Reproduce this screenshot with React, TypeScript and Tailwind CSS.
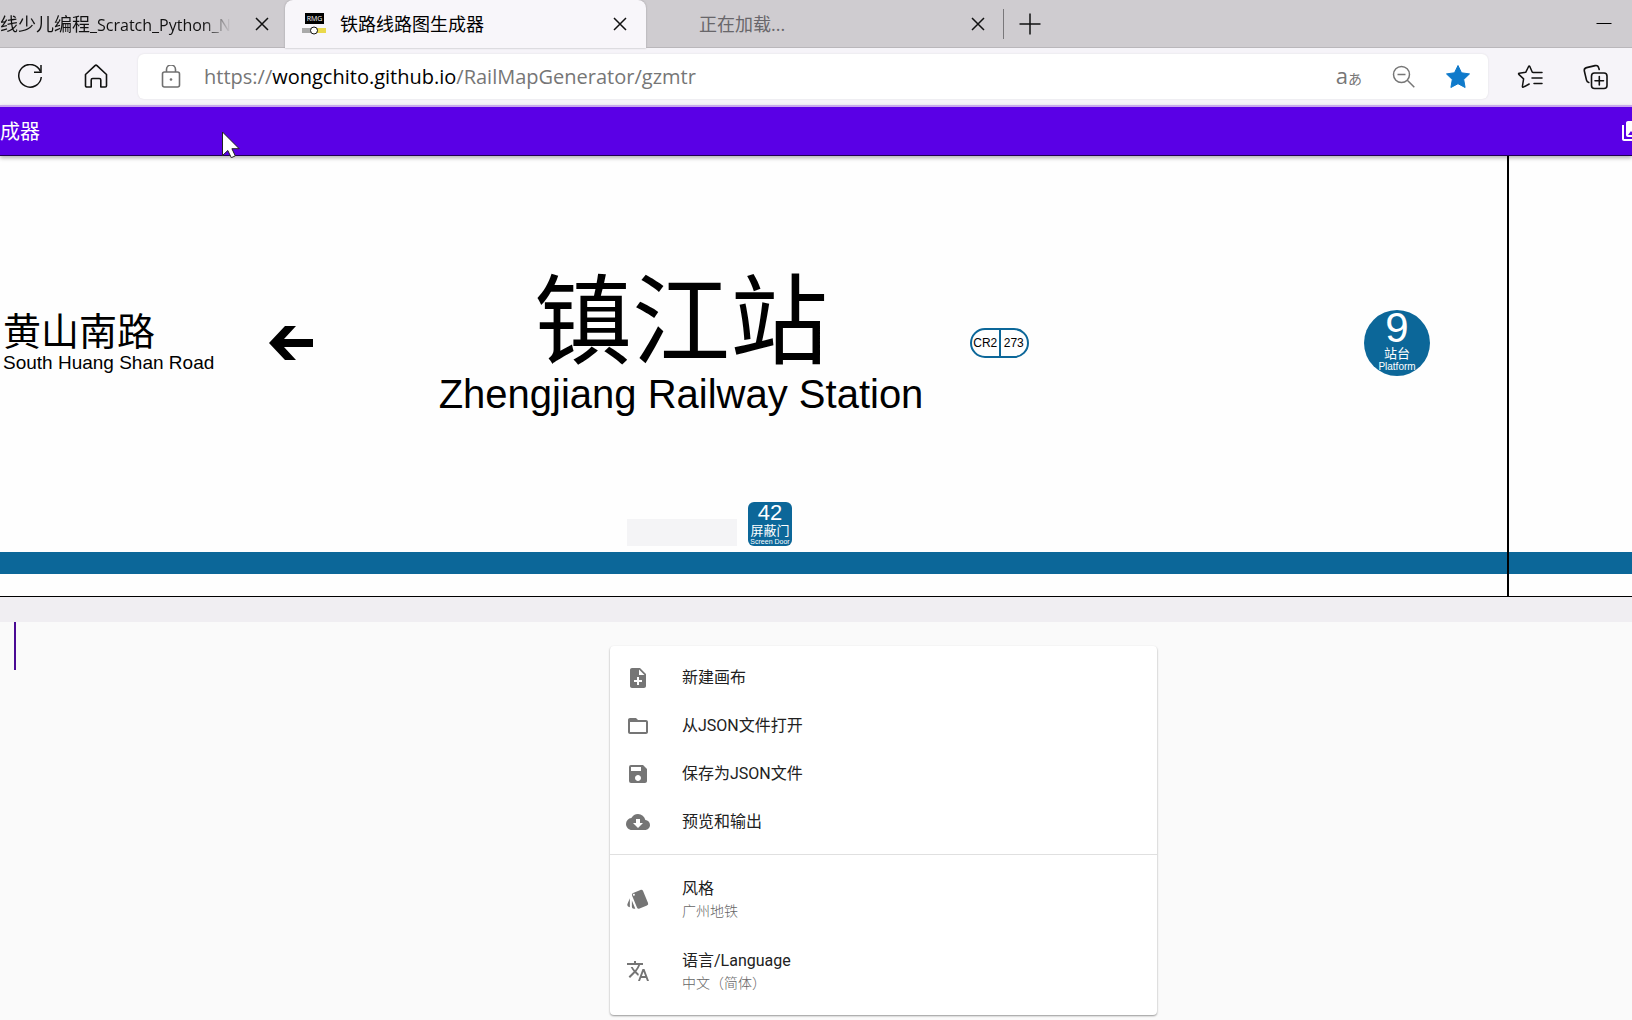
import React from 'react';
import {
  MdCloudDownload,
  MdFolderOpen,
  MdNoteAdd,
  MdPhotoLibrary,
  MdSave,
  MdStyle,
  MdTranslate,
} from 'react-icons/md';

type MenuItem = {
  icon: React.ReactNode;
  label: string;
  value?: string;
};

const fileItems: MenuItem[] = [
  { icon: <MdNoteAdd size={24} />, label: '新建画布' },
  { icon: <MdFolderOpen size={24} />, label: '从JSON文件打开' },
  { icon: <MdSave size={24} />, label: '保存为JSON文件' },
  { icon: <MdCloudDownload size={24} />, label: '预览和输出' },
];

const settingItems: MenuItem[] = [
  { icon: <MdStyle size={24} />, label: '风格', value: '广州地铁' },
  { icon: <MdTranslate size={24} />, label: '语言/Language', value: '中文（简体）' },
];

const CloseButton: React.FC = () => (
  <button type="button" aria-label="Close tab" className="flex h-6 w-6 shrink-0 items-center justify-center">
    <svg width="14" height="14" viewBox="0 0 14 14" fill="none" stroke="#111" strokeWidth="1.5">
      <path d="M1 1l12 12M13 1L1 13" />
    </svg>
  </button>
);

const Favicon: React.FC = () => (
  <svg width="24" height="22" viewBox="0 0 24 22" className="shrink-0">
    <rect x="3" y="0" width="19" height="11" fill="#000" />
    <text x="12.5" y="8" textAnchor="middle" fontSize="7" fontFamily="Open Sans, sans-serif" fill="#fff">
      RMG
    </text>
    <rect x="0" y="15" width="10" height="5" fill="#aaa" />
    <rect x="14" y="15" width="10" height="5" fill="#ead94c" />
    <circle cx="12" cy="17.5" r="3.5" fill="#fff" stroke="#111" />
  </svg>
);

const TabStrip: React.FC = () => (
  <div className="flex h-12 items-stretch bg-[#cfccd0]">
    <div className="flex w-[285px] items-center justify-between pr-[11px] shadow-[inset_0_-1px_0_#bab7bb]">
      <span className="bg-linear-to-r from-[#111] from-88% to-transparent bg-clip-text text-lg whitespace-nowrap text-transparent">
        线少儿编程<span className="text-base">_Scratch_Python_N</span>
      </span>
      <CloseButton />
    </div>
    <div className="flex w-[361px] items-center rounded-t-lg bg-[#f8f6fa] pr-[14px] pl-[17px] shadow-[0_0_2px_#9a979b]">
      <Favicon />
      <span className="ml-[14px] flex-1 text-lg text-black">铁路线路图生成器</span>
      <CloseButton />
    </div>
    <div className="flex w-[357px] items-center pr-[13px] pl-[53px] shadow-[inset_0_-1px_0_#bab7bb]">
      <span className="flex-1 text-lg text-[#68666a]">正在加载...</span>
      <CloseButton />
    </div>
    <div className="flex flex-1 items-center shadow-[inset_0_-1px_0_#bab7bb]">
      <div className="h-[30px] w-px bg-[#79777a]" />
      <button type="button" aria-label="New tab" className="ml-[15px]">
        <svg width="22" height="22" viewBox="0 0 22 22" stroke="#111" strokeWidth="1.5">
          <path d="M11 0.5v21M0.5 11h21" />
        </svg>
      </button>
      <button type="button" aria-label="Minimize" className="mr-5 ml-auto">
        <svg width="16" height="16" viewBox="0 0 16 16" stroke="#000">
          <path d="M0.5 7.5h15" />
        </svg>
      </button>
    </div>
  </div>
);

const AddressBar: React.FC = () => (
  <div className="flex h-[57px] items-center bg-[#f6f4f9]">
    <button type="button" aria-label="Reload" className="ml-[17px]">
      <svg width="26" height="26" viewBox="0 0 26 26" fill="none" stroke="#111" strokeWidth="1.5">
        <path d="M23.5 7.5A11.3 11.3 0 1 0 24.3 13" />
        <path d="M24 1v7.2h-7" />
      </svg>
    </button>
    <button type="button" aria-label="Home" className="ml-10">
      <svg width="26" height="26" viewBox="0 0 26 26" fill="none" stroke="#111" strokeWidth="1.6">
        <path
          strokeLinejoin="round"
          d="M2.5 10.500L12 1.600a1.500 1.500 0 0 1 2 0l9.500 8.900v11.200a1.300 1.300 0 0 1-1.300 1.300h-4.400V16a1.500 1.500 0 0 0-1.500-1.500h-6.600A1.500 1.500 0 0 0 8.200 16v7H3.800a1.300 1.300 0 0 1-1.300-1.300z"
        />
      </svg>
    </button>
    <div className="ml-[29px] flex h-[45px] flex-1 items-center rounded-md bg-white shadow-[0_0_2px_#dddbe0]">
      <svg width="20" height="24" viewBox="0 0 20 24" fill="none" stroke="#707070" strokeWidth="1.6" className="ml-[23px]">
        <rect x="1.5" y="7" width="17" height="15" rx="2" />
        <path d="M5.5 7V4.500a4.500 4.500 0 0 1 9 0V7" />
        <circle cx="10" cy="14.5" r="1.3" fill="#707070" stroke="none" />
      </svg>
      <a href="https://wongchito.github.io/RailMapGenerator/gzmtr" className="ml-[23px] flex-1 text-xl text-[#767676]">
        https://<span className="text-black">wongchito.github.io</span>/RailMapGenerator/gzmtr
      </a>
      <button type="button" aria-label="Translate page" className="flex items-baseline text-[#767676]">
        <span className="text-[22px] leading-6">a</span>
        <span className="text-sm leading-6">あ</span>
      </button>
      <button type="button" aria-label="Zoom out" className="ml-[30px]">
        <svg width="24" height="24" viewBox="0 0 24 24" fill="none" stroke="#767676" strokeWidth="1.5">
          <circle cx="9.5" cy="9.5" r="8" />
          <path d="M5.5 9.5h8M15.3 15.3l7 7" />
        </svg>
      </button>
      <button type="button" aria-label="Favorite" className="mr-[17px] ml-[29px]">
        <svg width="26" height="26" viewBox="0 0 26 26" fill="#0f7acb" stroke="#0f7acb" strokeLinejoin="round">
          <path d="M13 1.500l3.500 7.300 8 1.100-5.800 5.600 1.400 8L13 19.700l-7.100 3.800 1.400-8L1.500 9.900l8-1.100z" />
        </svg>
      </button>
    </div>
    <button type="button" aria-label="Favorites" className="ml-[29px]">
      <svg width="26" height="26" viewBox="0 0 26 26" fill="none" stroke="#111" strokeWidth="1.5" strokeLinejoin="round" strokeLinecap="round">
        <path d="M16.500 8.500l-1.200-.2L12.800 2.500q-.6-1-1.200 0L8.700 8.300l-6.500.9q-1.100.3-.4 1.200l4.800 4.500-1.200 7.500q0 1.100 1 .7l5.800-3.100" />
        <path d="M17 8.500h8M15 14h10M17 19.500h8" />
      </svg>
    </button>
    <button type="button" aria-label="Collections" className="mr-[23px] ml-10">
      <svg width="26" height="26" viewBox="0 0 26 26" fill="none" stroke="#111" strokeWidth="1.6" strokeLinecap="round">
        <rect x="8.5" y="9" width="15.5" height="15.5" rx="3" />
        <path d="M16.300 12.500v8.500M12 16.800h8.500" />
        <path d="M5.800 18.500a3 3 0 0 1-2.300-2.300L1.400 7.200a3 3 0 0 1 2.200-3.600l8.500-2a3 3 0 0 1 3.600 2.200l.5 1.700" />
      </svg>
    </button>
  </div>
);

const AppHeader: React.FC = () => (
  <header className="relative flex h-[51px] items-center justify-between overflow-hidden border-t-2 border-b border-t-[#c9a8ee] border-b-[#1f0052] bg-[#5a00e6] text-white shadow-[0_2px_4px_rgba(0,0,0,0.3)]">
    <h1 className="pt-0.5 text-xl">成器</h1>
    <button type="button" aria-label="Templates" className="-mr-3">
      <MdPhotoLibrary size={24} />
    </button>
  </header>
);

const StationSign: React.FC = () => (
  <section className="flex border-b border-black bg-[#fefefe] text-black">
    <div className="min-w-0 flex-1 border-r-2 border-black">
      <div className="flex h-[346px] items-center pt-7 whitespace-nowrap">
        <div className="w-[266px] pt-0.5 pl-[3px]">
          <p className="text-[38px] leading-[38px]">黄山南路</p>
          <p className="text-[19px] leading-6">South Huang Shan Road</p>
        </div>
        <svg width="48" height="36" viewBox="0 0 48 36" fill="#000">
          <path d="M3 18L19 1h11L18 14h29v8H18l12 13H19z" />
        </svg>
        <div className="ml-[126px] flex w-[482px] flex-col items-center pt-1.5">
          <p className="text-[98px] leading-[96px]">镇江站</p>
          <p className="text-[40px] leading-[48px]">Zhengjiang Railway Station</p>
        </div>
        <div className="ml-12 flex h-[30px] w-[59px] rounded-full border-2 border-[#0c6799] text-xs leading-[26px]">
          <span className="flex-1 border-r-2 border-[#0c6799] text-center">CR2</span>
          <span className="flex-1 text-center">273</span>
        </div>
        <div className="mr-[77px] ml-auto flex h-[66px] w-[66px] flex-col items-center rounded-full bg-[#0c6799] text-white">
          <span className="text-[42px] leading-[36px]">9</span>
          <span className="text-[13px] leading-4">站台</span>
          <span className="text-[10px] leading-[10px]">Platform</span>
        </div>
      </div>
      <div className="flex h-[50px] items-end gap-[11px] pb-1.5 pl-[627px]">
        <div className="h-[27px] w-[110px] bg-[#f4f4f6]" />
        <div className="flex h-11 w-11 flex-col items-center rounded-md bg-[#0c6799] whitespace-nowrap text-white">
          <span className="text-[22px] leading-[22px]">42</span>
          <span className="text-[13px] leading-[14px]">屏蔽门</span>
          <span className="text-[7px] leading-[8px]">Screen Door</span>
        </div>
      </div>
      <div className="h-[22px] bg-[#0c6799]" />
      <div className="h-[22px]" />
    </div>
    <div className="flex w-[123px] flex-col justify-end">
      <div className="h-[22px] bg-[#0c6799]" />
      <div className="h-[22px]" />
    </div>
  </section>
);

const MenuRow: React.FC<{ item: MenuItem }> = ({ item }) => (
  <li>
    <button
      type="button"
      className={`flex w-full items-center px-4 text-left hover:bg-gray-50 ${item.value ? 'h-[72px]' : 'h-12'}`}
    >
      <span className="w-14 text-[#757575]">{item.icon}</span>
      <span>
        <span className="block text-base leading-6 text-[#212121]">{item.label}</span>
        {item.value && <span className="block text-sm leading-5 font-light text-[#666]">{item.value}</span>}
      </span>
    </button>
  </li>
);

const SettingsMenu: React.FC = () => (
  <div className="w-[547px] rounded bg-white shadow-[0_1px_2px_rgba(0,0,0,0.4)]">
    <ul className="border-b border-[#e0e0e0] py-2">
      {fileItems.map((item) => (
        <MenuRow key={item.label} item={item} />
      ))}
    </ul>
    <ul className="py-2">
      {settingItems.map((item) => (
        <MenuRow key={item.label} item={item} />
      ))}
    </ul>
  </div>
);

const MouseCursor: React.FC = () => (
  <svg width="20" height="28" viewBox="0 0 20 28" className="absolute top-[130px] left-[221px]" fill="#fff" stroke="#222">
    <path d="M1.500 2v23.500l5.300-5 3.500 7.200 4-1.800-3.400-7.200h7.300z" />
  </svg>
);

const App: React.FC = () => {
  return (
    <div className="relative min-h-screen overflow-hidden bg-[#fafafa]">
      <div className="font-['Open_Sans','Noto_Sans_CJK_SC',sans-serif]">
        <TabStrip />
        <AddressBar />
      </div>
      <div className="font-['Roboto','Noto_Sans_CJK_SC',sans-serif]">
        <AppHeader />
        <div className="font-['Liberation_Sans','Noto_Sans_CJK_SC',sans-serif]">
          <StationSign />
        </div>
        <div className="h-[25px] bg-[#f0eef2]" />
        <main className="flex items-start">
          <div className="ml-[14px] h-12 w-[2px] bg-[#4a0a94]" />
          <div className="flex flex-1 justify-center pt-6 pr-[475px] pl-[594px]">
            <SettingsMenu />
          </div>
        </main>
      </div>
      <MouseCursor />
    </div>
  );
};

export default App;
